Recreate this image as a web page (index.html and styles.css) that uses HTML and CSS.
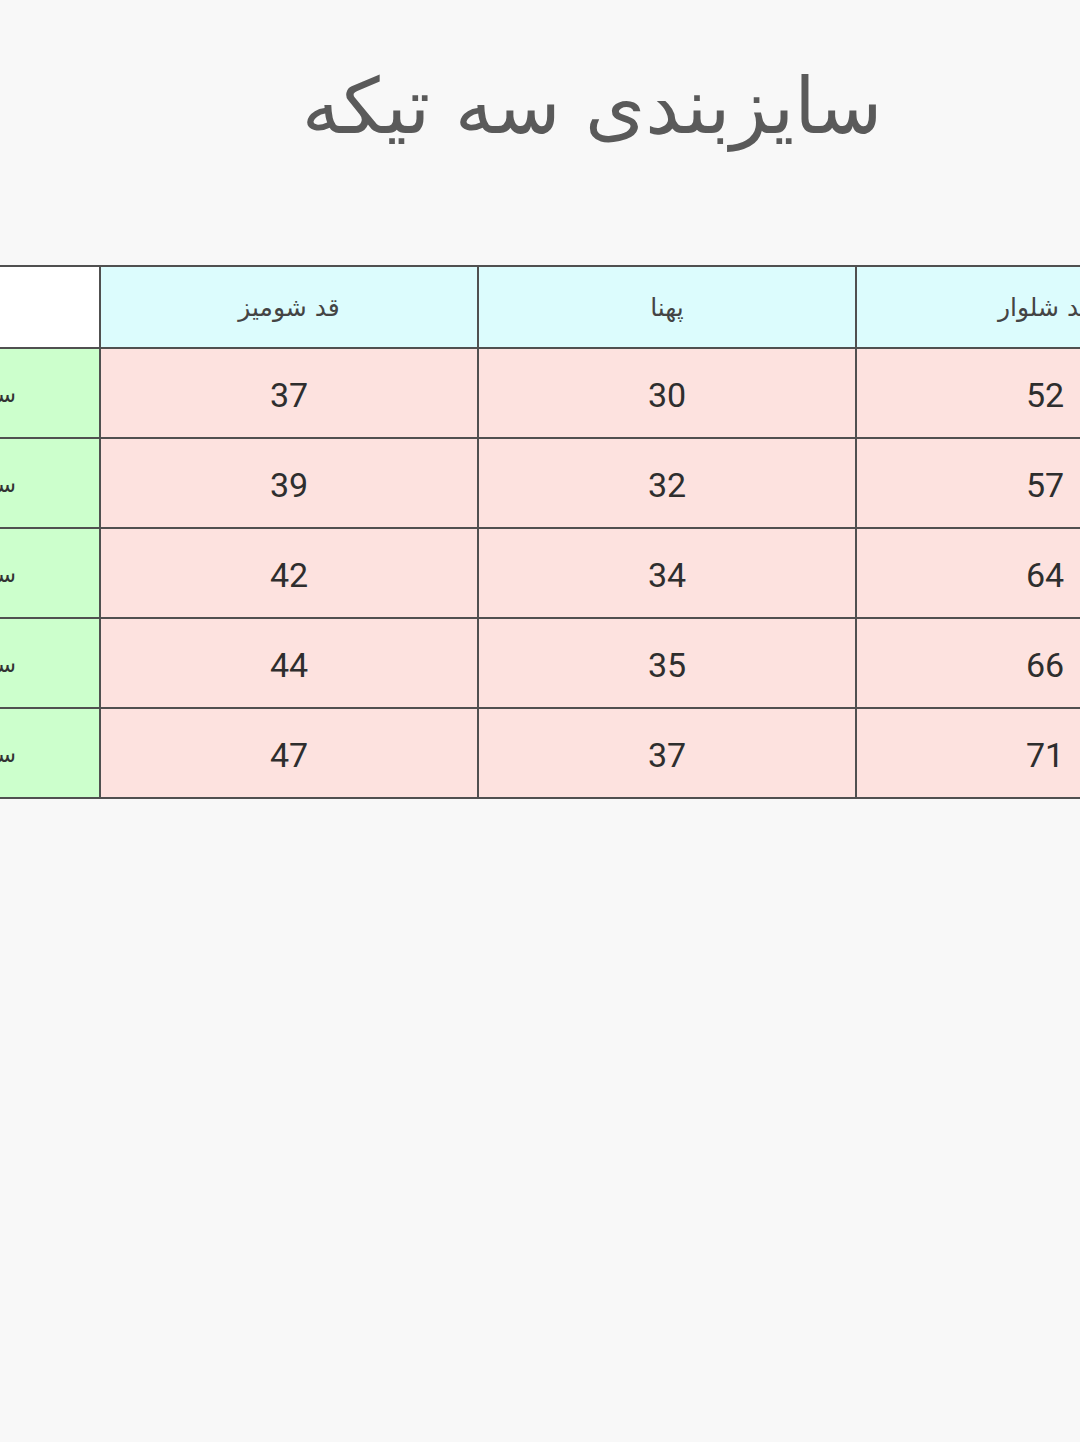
FILE: index.html
```html
<!DOCTYPE html>
<html lang="fa">
<head>
<meta charset="utf-8">
<title>سایزبندی سه تیکه</title>
<link rel="stylesheet" href="styles.css">
</head>
<body>
<div class="page">
  <h1 class="title">سایزبندی سه تیکه</h1>
  <div class="table-wrap">
    <table class="sizes">
      <colgroup>
        <col class="c"><col class="c"><col class="c"><col class="c">
      </colgroup>
      <thead>
        <tr>
          <th class="corner"></th>
          <th class="head">قد شومیز</th>
          <th class="head">پهنا</th>
          <th class="head">قد شلوار</th>
        </tr>
      </thead>
      <tbody>
        <tr><td class="size">سایز ۱</td><td class="num">37</td><td class="num">30</td><td class="num">52</td></tr>
        <tr><td class="size">سایز ۲</td><td class="num">39</td><td class="num">32</td><td class="num">57</td></tr>
        <tr><td class="size">سایز ۳</td><td class="num">42</td><td class="num">34</td><td class="num">64</td></tr>
        <tr><td class="size">سایز ۴</td><td class="num">44</td><td class="num">35</td><td class="num">66</td></tr>
        <tr><td class="size">سایز ۵</td><td class="num">47</td><td class="num">37</td><td class="num">71</td></tr>
      </tbody>
    </table>
  </div>
</div>
</body>
</html>
```

FILE: styles.css
```css
html, body {
  margin: 0;
  padding: 0;
  background: #f8f8f8;
}
.page {
  width: 1080px;
  height: 1442px;
  overflow: hidden;
  font-family: "DejaVu Sans", sans-serif;
}
.title {
  margin: 0;
  padding: 52px 0 0 104px;
  height: 214px;
  box-sizing: border-box;
  text-align: center;
  font-family: "DejaVu Sans", sans-serif;
  font-weight: normal;
  font-size: 77px;
  line-height: 110px;
  color: #5a5a5a;
  direction: rtl;
}
.table-wrap {
  padding-top: 51px;
}
.sizes {
  margin-left: -279px;
  border-collapse: collapse;
  table-layout: fixed;
  width: 1514px;
}
.sizes .c {
  width: 378px;
}
.sizes th, .sizes td {
  border: 2px solid #505050;
  padding: 0;
  text-align: center;
  vertical-align: middle;
}
.sizes thead th {
  height: 80px;
  font-weight: normal;
  font-size: 25px;
  color: #444;
  direction: rtl;
}
.sizes .corner {
  background: #ffffff;
}
.sizes .head {
  background: #dcfcfd;
}
.sizes td {
  height: 85px;
  padding-top: 3px;
}
.sizes .num {
  background: #fde2df;
  font-family: Roboto, sans-serif;
  font-size: 34px;
  color: #2e2e2e;
}
.sizes .size {
  background: #ccffcc;
  direction: rtl;
  text-align: right;
  padding-right: 83px;
  font-size: 22px;
  color: #333;
}
```
